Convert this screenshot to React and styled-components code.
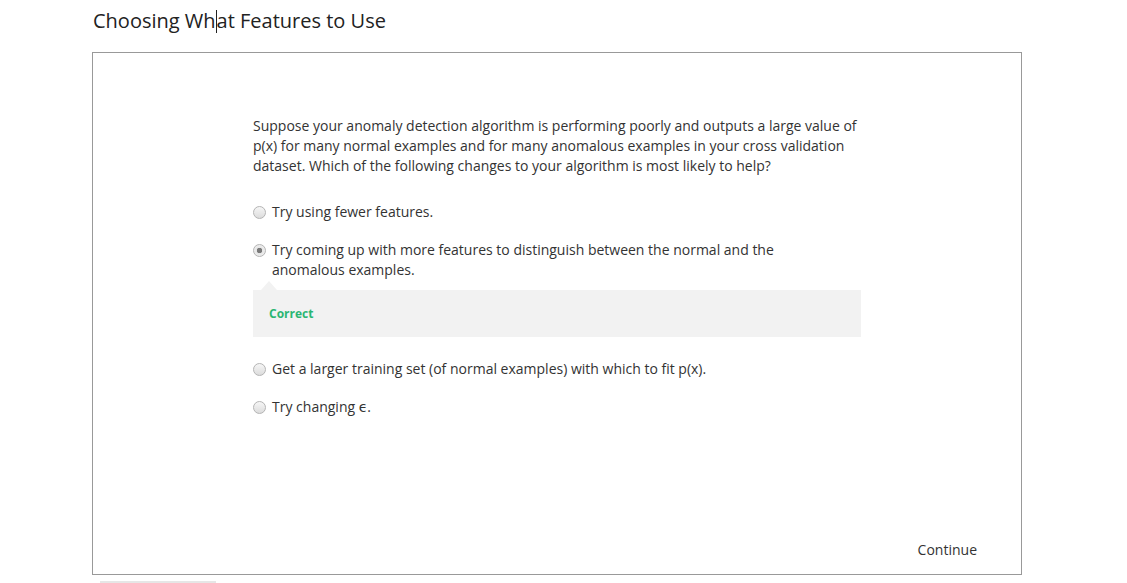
import styled, { createGlobalStyle } from "styled-components";

const GlobalStyle = createGlobalStyle`
  html, body {
    margin: 0;
    padding: 0;
    background: #fff;
  }
  body {
    font-family: "Open Sans", "DejaVu Sans", sans-serif;
    color: #333;
  }
`;

const options = [
  { id: 1, text: "Try using fewer features." },
  {
    id: 2,
    text: "Try coming up with more features to distinguish between the normal and the anomalous examples.",
    checked: true,
    feedback: "Correct",
  },
  { id: 3, text: "Get a larger training set (of normal examples) with which to fit p(x)." },
  { id: 4, text: "Try changing \u03F5." },
];

export default function App() {
  return (
    <Page>
      <GlobalStyle />
      <Title>
        Choosing Wh<Caret />at Features to Use
      </Title>
      <Frame>
        <Column>
          <Question>
            Suppose your anomaly detection algorithm is performing poorly and outputs a large value of
            p(x) for many normal examples and for many anomalous examples in your cross validation
            dataset. Which of the following changes to your algorithm is most likely to help?
          </Question>
          <Options>
            {options.map((o) => (
              <div key={o.id}>
                <Option>
                  <Radio checked={o.checked} />
                  <Label>{o.text}</Label>
                </Option>
                {o.feedback && (
                  <Feedback>
                    <FeedbackText>{o.feedback}</FeedbackText>
                  </Feedback>
                )}
              </div>
            ))}
          </Options>
        </Column>
        <Footer>
          <ContinueButton>Continue</ContinueButton>
        </Footer>
      </Frame>
      <NextBar />
    </Page>
  );
}

const Page = styled.div`
  padding: 6px 0 0 92px;
  width: 930px;
`;

const Title = styled.h1`
  margin: 0 0 16px 1px;
  font-size: 20px;
  line-height: 30px;
  font-weight: 400;
  color: #222;
`;

const Caret = styled.span`
  display: inline-block;
  width: 0;
  height: 23px;
  border-left: 1px solid #222;
  vertical-align: -5px;
`;

const Frame = styled.div`
  box-sizing: border-box;
  width: 930px;
  height: 523px;
  border: 1px solid #999;
  display: flex;
  flex-direction: column;
  padding-top: 63px;
`;

const Column = styled.div`
  width: 608px;
  margin: 0 auto;
`;

const Question = styled.p`
  margin: 0 0 26px;
  font-size: 14px;
  line-height: 20px;
  color: #333;
`;

const Options = styled.div`
  display: flex;
  flex-direction: column;
  gap: 18px;
`;

const Option = styled.div`
  display: flex;
  align-items: flex-start;
`;

const Radio = styled.span`
  box-sizing: border-box;
  flex: none;
  width: 13px;
  height: 13px;
  margin: 4px 6px 0 0;
  border-radius: 50%;
  border: 1px solid #b4b4b4;
  background: ${(p) =>
    p.checked
      ? "radial-gradient(circle, #7a7a7a 0 2.5px, #e6e6e6 3px, #f4f4f4 100%)"
      : "linear-gradient(#f6f6f6, #dcdcdc)"};
`;

const Label = styled.span`
  max-width: 520px;
  font-size: 14px;
  line-height: 20px;
  color: #333;
`;

const Feedback = styled.div`
  position: relative;
  margin-top: 10px;
  margin-bottom: 4px;
  height: 47px;
  background: #f2f2f2;
  display: flex;
  align-items: center;
  padding-left: 16px;

  &::before {
    content: "";
    position: absolute;
    top: -9px;
    left: 8px;
    border-left: 8px solid transparent;
    border-right: 8px solid transparent;
    border-bottom: 9px solid #f2f2f2;
  }
`;

const FeedbackText = styled.span`
  font-size: 12px;
  font-weight: 700;
  color: #2bb673;
`;

const Footer = styled.div`
  margin-top: auto;
  display: flex;
  justify-content: flex-end;
  padding: 0 44px 14px 0;
`;

const ContinueButton = styled.button`
  border: none;
  background: none;
  padding: 0;
  font-family: "Open Sans", "DejaVu Sans", sans-serif;
  font-size: 14px;
  line-height: 20px;
  color: #333;
  cursor: pointer;
`;

const NextBar = styled.div`
  margin: 6px 0 0 8px;
  width: 116px;
  height: 2px;
  background: #e6e6e6;
`;
